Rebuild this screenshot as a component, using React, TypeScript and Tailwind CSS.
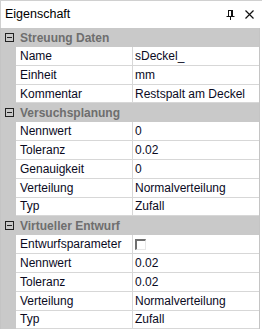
import { Fragment } from "react";

type Row = { label: string; value: string; checkbox?: boolean };
type Group = { title: string; rows: Row[] };

const groups: Group[] = [
  {
    title: "Streuung Daten",
    rows: [
      { label: "Name", value: "sDeckel_" },
      { label: "Einheit", value: "mm" },
      { label: "Kommentar", value: "Restspalt am Deckel" },
    ],
  },
  {
    title: "Versuchsplanung",
    rows: [
      { label: "Nennwert", value: "0" },
      { label: "Toleranz", value: "0.02" },
      { label: "Genauigkeit", value: "0" },
      { label: "Verteilung", value: "Normalverteilung" },
      { label: "Typ", value: "Zufall" },
    ],
  },
  {
    title: "Virtueller Entwurf",
    rows: [
      { label: "Entwurfsparameter", value: "", checkbox: true },
      { label: "Nennwert", value: "0.02" },
      { label: "Toleranz", value: "0.02" },
      { label: "Verteilung", value: "Normalverteilung" },
      { label: "Typ", value: "Zufall" },
    ],
  },
];

function CollapseBox() {
  return (
    <div className="w-[9px] h-[9px] border border-[#222] flex items-center justify-center">
      <div className="w-[5px] h-px bg-[#222]" />
    </div>
  );
}

export default function App() {
  return (
    <div
      className="w-[262px] h-[331px] bg-white overflow-hidden text-[12px] text-black"
      style={{ fontFamily: '"Liberation Sans", Arial, sans-serif' }}
    >
      <div className="h-[28px] border-t border-l border-[#d0d0d0] flex items-center justify-between pl-[4px] pr-[8px]">
        <span className="text-[12.5px]">Eigenschaft</span>
        <div className="flex items-center gap-[10px]">
          <svg width="9" height="10" viewBox="0 0 9 10">
            <path d="M2 0.5h5M2.5 1v5M5.5 1v5M6.5 1v5M0.5 6.5h8M4.5 7v3" stroke="#111" strokeWidth="1" fill="none" />
          </svg>
          <svg width="9" height="9" viewBox="0 0 9 9">
            <path d="M0.5 0.5L8.5 8.5M8.5 0.5L0.5 8.5" stroke="#111" strokeWidth="1.2" />
          </svg>
        </div>
      </div>
      <div className="w-[260px] border-l border-r border-[#c4c4c4] bg-[#c9c9c9]">
        {groups.map((g) => (
          <Fragment key={g.title}>
            <div className="h-[19px] flex items-center">
              <div className="w-[16px] flex justify-center pl-[1px]">
                <CollapseBox />
              </div>
              <span className="pl-[3px] font-bold text-[#6e6e6e] text-[12px]">{g.title}</span>
            </div>
            {g.rows.map((r) => (
              <div key={g.title + r.label} className="h-[18.8px] flex">
                <div className="w-[15px] shrink-0" />
                <div className="w-[117px] bg-white border-b border-r border-[#d7d7d7] flex items-center pl-[4px] text-[#0a0a1e]">
                  {r.label}
                </div>
                <div className="flex-1 bg-white border-b border-[#d7d7d7] flex items-center pl-[2px] text-[#0a0a1e]">
                  {r.checkbox ? (
                    <div className="w-[11px] h-[11px] border-t-2 border-l-2 border-t-[#6f6f6f] border-l-[#6f6f6f] border-b border-r border-b-[#e8e8e8] border-r-[#e8e8e8] bg-white" />
                  ) : (
                    r.value
                  )}
                </div>
              </div>
            ))}
          </Fragment>
        ))}
      </div>
    </div>
  );
}
